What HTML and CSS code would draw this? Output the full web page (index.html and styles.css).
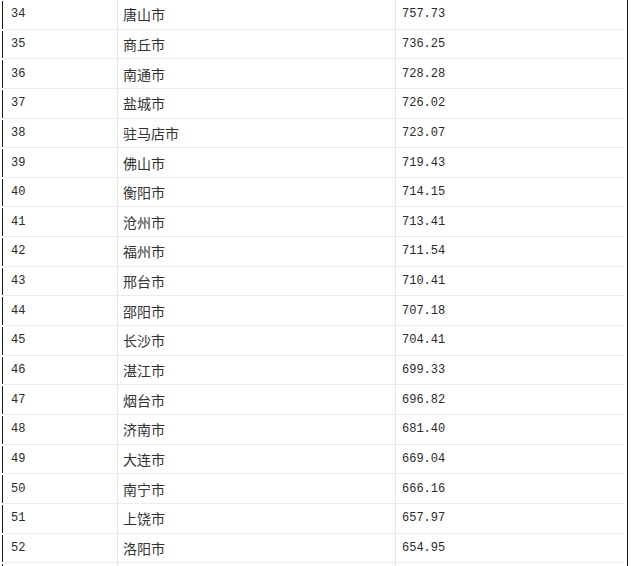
FILE: index.html
```html
<!DOCTYPE html>
<html lang="zh">
<head>
<meta charset="utf-8">
<link rel="stylesheet" href="styles.css">
</head>
<body>
<div class="page">
  <div class="rows">
    <div class="row"><span class="edge"></span><div class="c num">34</div><div class="c city">唐山市</div><div class="c num val">757.73</div></div>
    <div class="row"><span class="edge"></span><div class="c num">35</div><div class="c city">商丘市</div><div class="c num val">736.25</div></div>
    <div class="row"><span class="edge"></span><div class="c num">36</div><div class="c city">南通市</div><div class="c num val">728.28</div></div>
    <div class="row"><span class="edge"></span><div class="c num">37</div><div class="c city">盐城市</div><div class="c num val">726.02</div></div>
    <div class="row"><span class="edge"></span><div class="c num">38</div><div class="c city">驻马店市</div><div class="c num val">723.07</div></div>
    <div class="row"><span class="edge"></span><div class="c num">39</div><div class="c city">佛山市</div><div class="c num val">719.43</div></div>
    <div class="row"><span class="edge"></span><div class="c num">40</div><div class="c city">衡阳市</div><div class="c num val">714.15</div></div>
    <div class="row"><span class="edge"></span><div class="c num">41</div><div class="c city">沧州市</div><div class="c num val">713.41</div></div>
    <div class="row"><span class="edge"></span><div class="c num">42</div><div class="c city">福州市</div><div class="c num val">711.54</div></div>
    <div class="row"><span class="edge"></span><div class="c num">43</div><div class="c city">邢台市</div><div class="c num val">710.41</div></div>
    <div class="row"><span class="edge"></span><div class="c num">44</div><div class="c city">邵阳市</div><div class="c num val">707.18</div></div>
    <div class="row"><span class="edge"></span><div class="c num">45</div><div class="c city">长沙市</div><div class="c num val">704.41</div></div>
    <div class="row"><span class="edge"></span><div class="c num">46</div><div class="c city">湛江市</div><div class="c num val">699.33</div></div>
    <div class="row"><span class="edge"></span><div class="c num">47</div><div class="c city">烟台市</div><div class="c num val">696.82</div></div>
    <div class="row"><span class="edge"></span><div class="c num">48</div><div class="c city">济南市</div><div class="c num val">681.40</div></div>
    <div class="row"><span class="edge"></span><div class="c num">49</div><div class="c city">大连市</div><div class="c num val">669.04</div></div>
    <div class="row"><span class="edge"></span><div class="c num">50</div><div class="c city">南宁市</div><div class="c num val">666.16</div></div>
    <div class="row"><span class="edge"></span><div class="c num">51</div><div class="c city">上饶市</div><div class="c num val">657.97</div></div>
    <div class="row"><span class="edge"></span><div class="c num">52</div><div class="c city">洛阳市</div><div class="c num val">654.95</div></div>
    <div class="row"><span class="edge"></span><div class="c num"></div><div class="c city"></div><div class="c num val"></div></div>
  </div>
  <div class="rline"></div>
</div>
</body>
</html>
```

FILE: styles.css
```css
html, body {
  margin: 0;
  padding: 0;
  background: #ffffff;
  overflow: hidden;
}
.page {
  display: flex;
  height: 566px;
  overflow: hidden;
  padding-left: 2px;
}
.rows {
  width: 622px;
  margin-right: 3px;
  display: flex;
  flex-direction: column;
}
.row {
  display: flex;
  flex: 0 0 auto;
  height: 29.65px;
  box-sizing: border-box;
}
.edge {
  width: 1px;
  margin: 1px 0 1px 0;
  background: #1a1a1a;
  flex: 0 0 1px;
}
.c {
  box-sizing: border-box;
  border-bottom: 1px solid #ebebeb;
  display: flex;
  align-items: center;
  color: #2a2a2a;
}
.c:nth-child(2) {
  width: 115px;
  border-right: 1px solid #e6e6e6;
  padding-left: 8px;
}
.c:nth-child(3) {
  width: 278px;
  border-right: 1px solid #e6e6e6;
  padding-left: 5px;
}
.c:nth-child(4) {
  width: 228px;
  padding-left: 6px;
}
.num {
  font-family: "Liberation Mono", "DejaVu Sans Mono", monospace;
  font-size: 12px;
}
.city {
  font-family: "Noto Sans CJK SC", sans-serif;
  font-size: 14px;
  color: #333;
}
.rline {
  width: 1px;
  flex: 0 0 1px;
  background: #1a1a1a;
}
```
